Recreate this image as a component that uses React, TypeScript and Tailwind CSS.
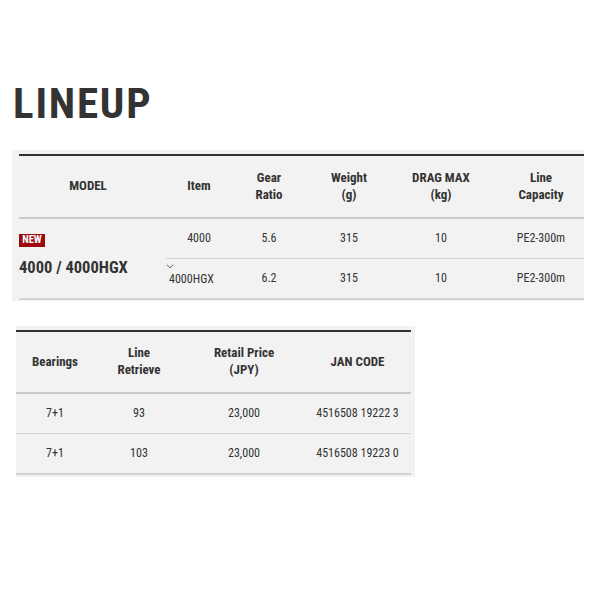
function Chevron() {
  return (
    <svg width="8" height="5" viewBox="0 0 8 5" className="block -ml-[3px]">
      <path d="M0.8 0.8 L4 3.8 L7.2 0.8" fill="none" stroke="#666" strokeWidth="1" />
    </svg>
  );
}

function HeadCell({ children }: { children: React.ReactNode }) {
  return (
    <div className="flex items-center justify-center pb-[2px] text-center text-[13px] font-bold leading-[17px] text-[#333]">
      {children}
    </div>
  );
}

function Cell({ children, last }: { children: React.ReactNode; last?: boolean }) {
  return (
    <div
      className={
        last
          ? "flex h-[41px] items-center justify-center border-b-2 border-[#d4d4d4] pb-[1px] text-[12px] text-[#333]"
          : "flex h-[40px] items-center justify-center border-b border-[#d4d4d4] pb-[1px] text-[12px] text-[#333]"
      }
    >
      {children}
    </div>
  );
}

export default function App() {
  return (
    <div className="w-[600px] h-[600px] bg-white font-['Roboto_Condensed',sans-serif] text-[#333]">
      <div className="pl-[13px] pt-[82px] text-[43px] font-bold leading-[43px] tracking-[1.8px] text-[#333]">
        LINEUP
      </div>

      <div className="ml-[12px] mt-[25px] w-[572px] overflow-hidden bg-[#f2f2f2] pl-[7px] pt-[4px] pb-[1px]">
        <div className="grid w-[573px] grid-cols-[147px_66px_74px_86px_98px_102px] border-t-2 border-[#333]">
          <div className="col-span-6 grid h-[63px] grid-cols-[147px_66px_74px_86px_98px_102px] border-b-2 border-[#cacaca]">
            <div className="flex items-center justify-center pb-[2px] pr-[9px] text-[13px] font-bold text-[#333]">MODEL</div>
            <HeadCell>Item</HeadCell>
            <HeadCell>
              Gear
              <br />
              Ratio
            </HeadCell>
            <HeadCell>
              Weight
              <br />
              (g)
            </HeadCell>
            <HeadCell>
              DRAG MAX
              <br />
              (kg)
            </HeadCell>
            <HeadCell>
              Line
              <br />
              Capacity
            </HeadCell>
          </div>

          <div className="row-span-2 flex flex-col justify-start border-b-2 border-[#d4d4d4] pt-[15px]">
            <div className="flex">
              <span className="flex h-[13px] w-[26px] items-center justify-center bg-[#9e0b0f] text-[10.5px] font-bold leading-none text-white">
                NEW
              </span>
            </div>
            <div className="mt-[11px] text-[16.5px] font-bold leading-[20px] text-[#333]">4000 / 4000HGX</div>
          </div>
          <Cell>4000</Cell>
          <Cell>5.6</Cell>
          <Cell>315</Cell>
          <Cell>10</Cell>
          <Cell>PE2-300m</Cell>

          <div className="flex h-[41px] flex-col items-start border-b-2 border-[#d4d4d4] pl-[3px] pt-[5px] text-[12px] text-[#333]">
            <Chevron />
            <span className="mt-[3px] leading-[14px]">4000HGX</span>
          </div>
          <Cell last>6.2</Cell>
          <Cell last>315</Cell>
          <Cell last>10</Cell>
          <Cell last>PE2-300m</Cell>
        </div>
      </div>

      <div className="ml-[16px] mt-[25px] w-[399px] bg-[#f2f2f2] pr-[4px] pt-[4px] pb-[2px]">
        <div className="grid grid-cols-[78px_90px_120px_107px] border-t-2 border-[#333]">
          <div className="col-span-4 grid h-[62px] grid-cols-[78px_90px_120px_107px] border-b-2 border-[#cacaca]">
            <HeadCell>Bearings</HeadCell>
            <HeadCell>
              Line
              <br />
              Retrieve
            </HeadCell>
            <HeadCell>
              Retail Price
              <br />
              (JPY)
            </HeadCell>
            <HeadCell>JAN CODE</HeadCell>
          </div>
          <Cell>7+1</Cell>
          <Cell>93</Cell>
          <Cell>23,000</Cell>
          <Cell>4516508 19222 3</Cell>
          <Cell last>7+1</Cell>
          <Cell last>103</Cell>
          <Cell last>23,000</Cell>
          <Cell last>4516508 19223 0</Cell>
        </div>
      </div>
    </div>
  );
}
